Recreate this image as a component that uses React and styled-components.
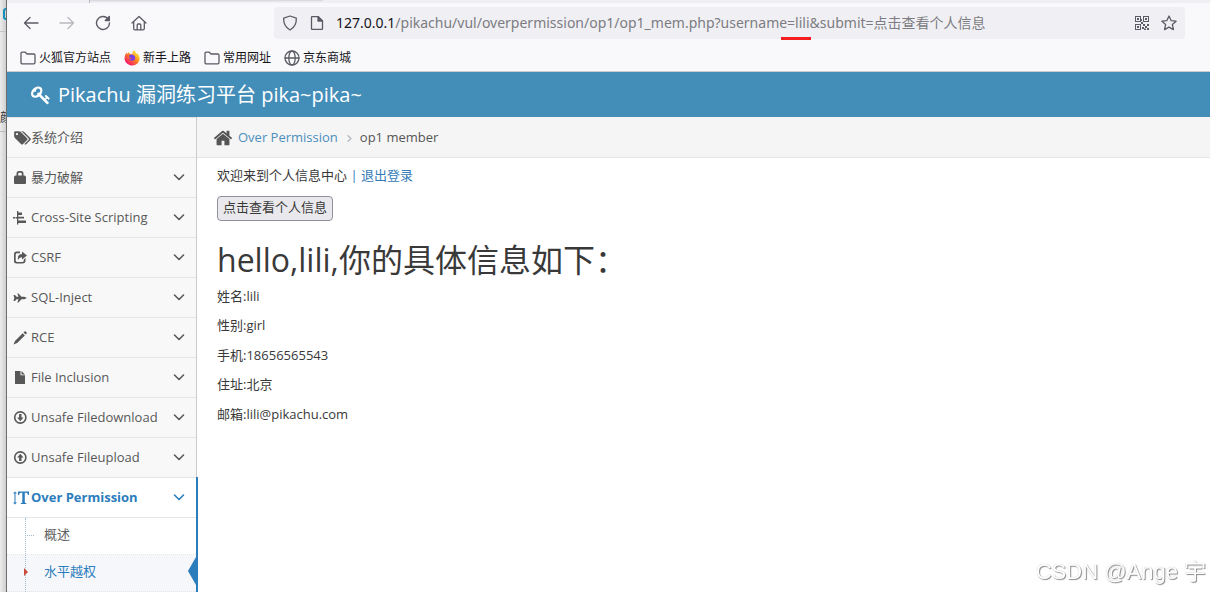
import React from "react";
import styled, { createGlobalStyle, css } from "styled-components";

const sans = `"Open Sans", "Noto Sans CJK SC", sans-serif`;

const Global = createGlobalStyle`
  *, *::before, *::after { box-sizing: border-box; }
  body { margin: 0; background: #fff; font: 13px/1.5 ${sans}; color: #393939; overflow: hidden; }
  a { color: #337ab7; text-decoration: none; }
  ul, ol, h1, p { margin: 0; padding: 0; list-style: none; }
  svg { display: block; flex: none; }
`;

const Desktop = styled.div`
  display: grid;
  grid-template-columns: 7px minmax(0, 1fr);
  height: 100vh;
  overflow: hidden;
`;
const Behind = styled.div`
  display: flex;
  flex-direction: column;
  overflow: hidden;
  border-right: 1px solid #6e6e70;
  background: linear-gradient(90deg, #ececec, #cfcfcf);
  font-size: 12px;
  line-height: 20px;
  color: #333;
`;
const BehindTab = styled.div`
  height: 32px;
  padding: 8px 0 0 3px;
  border-bottom: 1px solid #c4c4c4;
  color: #1590bb;
`;
const BehindText = styled.div`
  height: 100px;
  padding-top: 76px;
  white-space: nowrap;
  border-bottom: 1px solid #bbb;
`;
const Window = styled.div`
  display: flex;
  flex-direction: column;
  min-width: 0;
`;
const TabEdge = styled.div`
  display: flex;
  height: 3px;
  flex: none;
  background: #f0f0f4;
  padding-left: 82px;
`;
const ActiveTab = styled.div`
  width: 234px;
  border-left: 1px solid #b5b5bd;
  background: linear-gradient(#d4d4d8, #f0f0f4 2px);
`;
const Toolbar = styled.div`
  display: flex;
  align-items: center;
  flex: none;
  height: 40px;
  padding: 0 25px 0 14px;
  background: #f9f9fb;
  color: #5b5b66;
`;
const ToolButton = styled.button`
  display: grid;
  place-items: center;
  width: 20px;
  height: 32px;
  margin-right: 16px;
  padding: 0;
  border: 0;
  background: none;
  color: inherit;
  opacity: ${(p) => (p.disabled ? 0.4 : 1)};
`;
const AddressBar = styled.div`
  position: relative;
  display: flex;
  align-items: center;
  flex: 1;
  min-width: 0;
  height: 32px;
  margin-left: 109px;
  padding: 0 8px;
  gap: 12px;
  border-radius: 4px;
  background: #f0f0f4;
`;
const Url = styled.div`
  display: flex;
  flex: 1;
  min-width: 0;
  font: 14px/20px "Noto Sans", "Noto Sans CJK SC", sans-serif;
`;
const Host = styled.label`
  color: #15141a;
`;
const UrlInput = styled.input`
  flex: 1;
  min-width: 0;
  padding: 0;
  border: 0;
  outline: 0;
  background: none;
  font: inherit;
  color: #7c7c82;
`;
const RedMark = styled.span`
  position: absolute;
  left: 507px;
  bottom: -1px;
  width: 30px;
  height: 3px;
  background: #f5201d;
`;
const Bookmarks = styled.nav`
  display: flex;
  flex: none;
  gap: 13px;
  height: 29px;
  padding: 0 13px;
  border-bottom: 1px solid #ccc;
  background: #f9f9fb;
`;
const Bookmark = styled.a`
  display: flex;
  align-items: center;
  gap: 3px;
  height: 29px;
  font-size: 12px;
  color: #15141a;
  svg { color: #5b5b66; }
`;
const Navbar = styled.header`
  display: flex;
  align-items: center;
  flex: none;
  height: 45px;
  padding-left: 24px;
  background: #438eb9;
`;
const Brand = styled.a`
  display: flex;
  align-items: center;
  gap: 7px;
  font-size: 20px;
  line-height: 20px;
  color: #fff;
`;
const Page = styled.div`
  display: flex;
  flex: 1;
  min-height: 0;
`;
const Sidebar = styled.nav`
  flex: none;
  width: 190px;
  border-right: 1px solid #ccc;
  background: #f2f2f2;
`;
const NavItem = styled.li`
  position: relative;
  border-top: 1px solid #e5e5e5;
  background: ${(p) => (p.$open ? "#fff" : "#f8f8f8")};
  ${(p) => p.$open && css`
    &::after {
      content: "";
      position: absolute;
      top: -1px;
      right: -2px;
      bottom: -1px;
      border-right: 2px solid #2b7dbc;
    }
  `}
`;
const NavLink = styled.a`
  display: flex;
  align-items: center;
  height: 39px;
  padding: 0 11px 0 6px;
  color: ${(p) => (p.$open ? "#2b7dbc" : "#585858")};
  font-weight: ${(p) => (p.$open ? 700 : 400)};
`;
const IconSlot = styled.span`
  display: flex;
  flex: none;
  width: 18px;
`;
const NavText = styled.span`
  flex: 1;
  white-space: nowrap;
`;
const Submenu = styled.ul`
  position: relative;
  border-top: 1px solid #e5e5e5;
  &::before {
    content: "";
    position: absolute;
    z-index: 1;
    left: 18px;
    top: 0;
    bottom: 0;
    border-left: 1px dotted #9dbdd6;
  }
`;
const SubItem = styled.li`
  position: relative;
  border-bottom: 1px dotted #e4e4e4;
  background: ${(p) => (p.$current ? "#f5f7fa" : "#fff")};
`;
const SubLink = styled.a`
  display: flex;
  align-items: center;
  height: 36px;
  padding: 0 0 3px 37px;
  color: ${(p) => (p.$current ? "#2b7dbc" : "#616161")};
`;
const Branch = styled.span`
  position: absolute;
  left: 20px;
  top: 17px;
  width: 7px;
  border-top: 1px dotted #9dbdd6;
`;
const Caret = styled.span`
  position: absolute;
  z-index: 2;
  left: 17px;
  top: 13px;
  border: solid transparent;
  border-width: 4px 0 4px 4px;
  border-left-color: #c84c39;
`;
const Pointer = styled.span`
  position: absolute;
  right: 0;
  top: 2px;
  border: solid transparent;
  border-width: 14px 8px 14px 0;
  border-right-color: #2b7dbc;
`;
const Main = styled.main`
  flex: 1;
  min-width: 0;
`;
const Breadcrumbs = styled.ol`
  display: flex;
  align-items: center;
  height: 41px;
  padding: 1px 0 0 16px;
  border-bottom: 1px solid #e5e5e5;
  background: #f5f5f5;
  color: #555;
  a { color: #4c8fbd; }
`;
const Crumb = styled.li`
  display: flex;
  align-items: center;
  gap: 5px;
`;
const Divider = styled.li`
  padding: 1px 7px 0 8px;
  color: #b2b6bf;
`;
const Content = styled.section`
  padding: 8px 20px;
`;
const Submit = styled.button`
  display: block;
  height: 25px;
  margin-top: 10px;
  padding: 0 5px;
  border: 1px solid #8f8f9d;
  border-radius: 4px;
  background: #e9e9ed;
  font: inherit;
  color: #393939;
`;
const Title = styled.h1`
  margin: 20px 0 8px;
  font-size: 32px;
  font-weight: 400;
  line-height: 38px;
`;
const Record = styled.p`
  margin-bottom: 10px;
`;
const Watermark = styled.div`
  position: fixed;
  right: 4px;
  bottom: 5px;
  font: 22px/30px "Liberation Sans", "Noto Sans CJK SC", sans-serif;
  color: #fff;
  text-shadow: 1px 1px 1px #8a8a8a, 0 0 1px #bbb;
`;

const Solid = ({ d, w = 14, h = 14, box = "0 0 14 14" }) => (
  <svg width={w} height={h} viewBox={box} fill="currentColor" fillRule="evenodd" aria-hidden="true"><path d={d} /></svg>
);
const Line = ({ children, size = 16, box = 16, width = 1.3 }) => (
  <svg width={size} height={size} viewBox={`0 0 ${box} ${box}`} fill="none" stroke="currentColor" strokeWidth={width} strokeLinecap="round" strokeLinejoin="round" aria-hidden="true">{children}</svg>
);

const KEY = "M832 512q0-80-56-136t-136-56-136 56-56 136q0 42 19 83-41-19-83-19-80 0-136 56t-56 136 56 136 136 56 136-56 56-136q0-42-19-83 41 19 83 19 80 0 136-56t56-136zm851 704q0 17-49 66t-66 49q-9 0-28.5-16t-36.5-33-38.5-40-24.5-26l-96 96 220 220q28 28 28 68 0 42-39 81t-81 39q-40 0-68-28l-671-671q-176 131-365 131-163 0-265.5-102.5t-102.5-265.5q0-160 95-313t248-248 313-95q163 0 265.5 102.5t102.5 265.5q0 189-131 365l355 355 96-96q-3-3-26-24.5t-40-38.5-33-36.5-16-28.5q0-17 49-66t66-49q13 0 23 10 6 6 46 44.5t82 79.5 86.5 86 73 78 28.5 41z";
const HOME = "M1472 992v480q0 26-19 45t-45 19h-384v-384h-256v384h-384q-26 0-45-19t-19-45v-480q0-1 .5-3t.5-3l575-474 575 474q1 2 1 6zm223-69l-62 74q-8 9-21 11h-3q-13 0-21-7l-692-577-692 577q-12 8-24 7-13-2-21-11l-62-74q-8-10-7-23.5t11-21.5l719-599q32-26 76-26t76 26l244 204v-195q0-14 9-23t23-9h192q14 0 23 9t9 23v408l219 182q10 8 11 21.5t-7 23.5z";
const TAGS = "M576 448q0-53-37.5-90.5t-90.5-37.5-90.5 37.5-37.5 90.5 37.5 90.5 90.5 37.5 90.5-37.5 37.5-90.5zm1067 576q0 53-37 90l-491 492q-39 37-91 37-53 0-90-37l-715-716q-38-37-64.5-101t-26.5-117v-416q0-52 38-90t90-38h416q53 0 117 26.5t102 64.5l715 714q37 39 37 91zm384 0q0 53-37 90l-491 492q-39 37-91 37-36 0-59-14t-53-45l470-470q37-37 37-90 0-52-37-91l-715-714q-38-38-102-64.5t-117-26.5h224q53 0 117 26.5t102 64.5l715 714q37 39 37 91z";

const Arrow = ({ up }) => (
  <svg width="14" height="14" viewBox="0 0 14 14" fill="none" stroke="currentColor" aria-hidden="true">
    <circle cx="7.300" cy="6.500" r="5.600" strokeWidth="1.600" />
    <path transform={up ? "rotate(180 7.300 6.500)" : undefined} fill="currentColor" stroke="none" d="M6.100 3h2.400v3.500h2L7.300 10.200 4.100 6.500h2z" />
  </svg>
);

const items = [
  { text: "系统介绍", leaf: true, icon: <Solid d={TAGS} w={18} h={16} box="0 0 2048 1792" /> },
  { text: "暴力破解", icon: <Solid d="M3.500 4.500V2.700Q3.500 0 6 0h2q2.500 0 2.500 2.700v1.800h.8q1.700 0 1.700 1.700v5.800q0 1-1 1H2q-1 0-1-1V6.200q0-1.700 1.700-1.700zM5.200 4.500h3.600V2.700q0-1-1-1H6.200q-1 0-1 1z" /> },
  { text: "Cross-Site Scripting", icon: <Solid d="M0 6h3v1.500H0zM4 0h1.300v1.500H9v2.500H5.300v1.800H11v1.800H5.300v1.800H13V12H5.300v1.500H4V7.500H2.500V6H4z" /> },
  { text: "CSRF", icon: <Solid d="M3.500 .5H7v1.800H4Q2.700 2.300 2.700 3.600v6q0 1.300 1.300 1.300h5.500q1.300 0 1.300-1.300V8.500l1.700-1.500v2.600q0 3-3 3h-6Q1 12.600 1 10.100V3.100Q1 .5 3.500.500zM9 .5l5 4-5 4V6.200Q6 6 5 9 4 3.200 9 3z" /> },
  { text: "SQL-Inject", icon: <Solid d="M.5 4H2l1.500 1.800h2L4.300 2.500h1.200l3 3.300h2.800L14 7l-2.700 1.200H8.500l-3 3.300H4.300l1.200-3.300h-2L2 10H.5l.8-3z" /> },
  { text: "RCE", icon: <Solid d="M10.500 1.500 11.500.500q.6-.5 1.200 0l.9.900q.5.600 0 1.200l-1 1zM9.700 2.300l2.100 2.100-7.600 7.600L.5 13.500 2 9.900z" /> },
  { text: "File Inclusion", icon: <Solid d="M2 0h5.500v4.300H12V13H2zM8.500 0 12 3.400H8.500z" /> },
  { text: "Unsafe Filedownload", icon: <Arrow /> },
  { text: "Unsafe Fileupload", icon: <Arrow up /> },
  { text: "Over Permission", open: true, icon: <Solid w={16} box="0 0 16 14" d="M2 .5 4 2.500H2.500v9H4l-2 2-2-2h1.500v-9H0zM5 .5h11v3.500h-1Q14.700 1.800 13 1.800h-1.200v9.400q0 .8 1.500.9v.9H7.800v-.9q1.500 0 1.500-.9V1.800H8Q6.300 1.800 6 4H5z" />,
    children: [{ text: "概述" }, { text: "水平越权", current: true }] },
];

const Folder = () => <Line size={16}><path d="M1 12.500v-9q0-1.300 1.300-1.300h3L7 4h6.700Q15 4 15 5.300v7.200q0 1.300-1.300 1.300H2.300Q1 13.800 1 12.500z" /></Line>;
const Firefox = () => (
  <svg width="16" height="16" viewBox="0 0 16 16" aria-hidden="true">
    <defs>
      <linearGradient id="fire" x1=".85" y1=".1" x2=".2" y2=".9">
        <stop offset="0" stopColor="#fff04a" /><stop offset=".45" stopColor="#ff8a1e" /><stop offset="1" stopColor="#f5156c" />
      </linearGradient>
    </defs>
    <path fill="url(#fire)" d="M9.700.3q2 1 2.500 3 2 .3 2.900 2.200 1.600 5-1.600 8-3.500 3-8 1.500Q.5 13 .5 8q0-3 2-5.500l.4 1.600L5 2l.4 1.800L8.500 4Q8 1.700 9.700.3z" />
    <path fill="#7a3fe0" d="M5 5.500q1.500-1.500 4-.8 2.500 1 2.200 3.500-.5 2.500-3 2.600-2.700 0-3.400-2.200 1.700 1 2.900-.2L5.500 7.500z" />
  </svg>
);
const Qr = () => (
  <Solid box="0 0 14 14" d="M0 0h6v6H0zM1 1v4h4V1zM2 2h2v2H2zM8 0h6v6H8zM9 1v4h4V1zM10 2h2v2h-2zM0 8h6v6H0zM1 9v4h4V9zM2 10h2v2H2zM6 6h2v2H6zM8 8h2v2H8zM12 8h2v2h-2zM10 10h2v2h-2zM7 11h2v2H7zM12 12h2v2h-2zM9 12.500h2V14H9zM6 3h1v2H6z" />
);
const Down = () => <Line size={12} box={12} width={1.6}><path d="m1.500 3 4.500 4.500L10.500 3" /></Line>;

export default function App() {
  return (
    <Desktop>
      <Global />
      <Behind aria-hidden="true">
        <BehindTab><Solid w={12} h={12} box="0 0 12 12" d="M3 0h6v12H3Q0 12 0 9V3Q0 0 3 0zM2 3v6q0 1 1 1h4V2H3Q2 2 2 3z" /></BehindTab>
        <BehindText>颜</BehindText>
      </Behind>
      <Window>
        <TabEdge><ActiveTab /></TabEdge>
        <Toolbar>
          <ToolButton aria-label="Back"><Line><path d="M15 8H1.500M7 2.500 1.500 8 7 13.500" /></Line></ToolButton>
          <ToolButton aria-label="Forward" disabled><Line><path d="M1 8h13.500M9 2.500 14.500 8 9 13.500" /></Line></ToolButton>
          <ToolButton aria-label="Reload"><Line width={1.4}><path d="M14.500 8A6.500 6.500 0 1 1 12.800 3.600" /><path fill="currentColor" d="M14.300 1.500v4h-4z" /></Line></ToolButton>
          <ToolButton aria-label="Home"><Line><path d="M1 8 8 1.500 15 8M2.700 6.800v6.700q0 1.300 1.300 1.300h8q1.300 0 1.300-1.300V6.800M6.200 14.500V10q0-1 1-1h1.600q1 0 1 1v4.500" /></Line></ToolButton>
          <AddressBar>
            <Line><path d="M8 1 14.300 3.200Q14.800 11 8 15 1.200 11 1.700 3.200z" /></Line>
            <Line size={14} box={14}><path d="M1.500 12.500v-11q0-1 1-1H8L12.500 5v7.500q0 1-1 1h-9q-1 0-1-1z" /><path fill="currentColor" d="M8 .5V5h4.500z" /></Line>
            <Url>
              <Host htmlFor="address">127.0.0.1</Host>
              <UrlInput id="address" defaultValue="/pikachu/vul/overpermission/op1/op1_mem.php?username=lili&submit=点击查看个人信息" />
            </Url>
            <Qr />
            <Line><path d="m8 1 2.100 4.600 5 .6-3.700 3.400 1 5L8 12.100l-4.400 2.500 1-5L.9 6.200l5-.6z" /></Line>
            <RedMark />
          </AddressBar>
        </Toolbar>
        <Bookmarks aria-label="Bookmarks">
          <Bookmark href="#"><Folder />火狐官方站点</Bookmark>
          <Bookmark href="#"><Firefox />新手上路</Bookmark>
          <Bookmark href="#"><Folder />常用网址</Bookmark>
          <Bookmark href="#"><Line><circle cx="8" cy="8" r="7" /><ellipse cx="8" cy="8" rx="3.200" ry="7" /><path d="M1 8h14" /></Line>京东商城</Bookmark>
        </Bookmarks>
        <Navbar>
          <Brand href="#"><Solid d={KEY} w={20} h={20} box="0 0 1792 1792" />Pikachu 漏洞练习平台 pika~pika~</Brand>
        </Navbar>
        <Page>
          <Sidebar>
            <ul>
              {items.map((item) => (
                <NavItem key={item.text} $open={item.open}>
                  <NavLink href="#" $open={item.open}>
                    <IconSlot>{item.icon}</IconSlot>
                    <NavText>{item.text}</NavText>
                    {!item.leaf && <Down />}
                  </NavLink>
                  {item.children && (
                    <Submenu>
                      {item.children.map((sub) => (
                        <SubItem key={sub.text} $current={sub.current}>
                          {sub.current ? <><Caret /><Pointer /></> : <Branch />}
                          <SubLink href="#" $current={sub.current}>{sub.text}</SubLink>
                        </SubItem>
                      ))}
                    </Submenu>
                  )}
                </NavItem>
              ))}
            </ul>
          </Sidebar>
          <Main>
            <Breadcrumbs>
              <Crumb><Solid d={HOME} w={20} h={20} box="0 0 1792 1792" /><a href="#">Over Permission</a></Crumb>
              <Divider aria-hidden="true"><Line size={7} box={7} width={1.2}><path d="M2 .7 5 3.500 2 6.300" /></Line></Divider>
              <Crumb>op1 member</Crumb>
            </Breadcrumbs>
            <Content>
              <p>欢迎来到个人信息中心 <a href="#">| 退出登录</a></p>
              <Submit type="submit">点击查看个人信息</Submit>
              <Title>hello,lili,你的具体信息如下：</Title>
              <Record>姓名:lili</Record>
              <Record>性别:girl</Record>
              <Record>手机:18656565543</Record>
              <Record>住址:北京</Record>
              <Record>邮箱:lili@pikachu.com</Record>
            </Content>
          </Main>
        </Page>
      </Window>
      <Watermark>CSDN @Ange 宇</Watermark>
    </Desktop>
  );
}
